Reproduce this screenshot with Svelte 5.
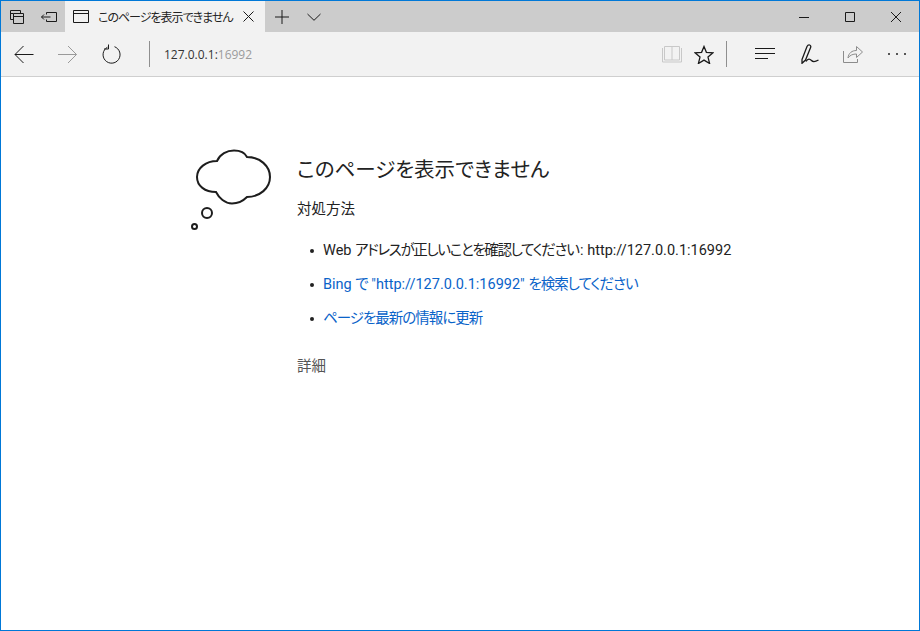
<script>
  const bullets = [
    { parts: [['Web ', ''], ['アドレスが正しいことを確認してください', 'cjk tight'], [': http://127.0.0.1:16992', '']], link: false },
    { parts: [['Bing ', ''], ['で', 'cjk'], [' "http://127.0.0.1:16992" ', ''], ['を検索してください', 'cjk']], link: true },
    { parts: [['ページを最新の情報に更新', 'cjk']], link: true }
  ];
</script>

<div class="window">
  <header class="titlebar">
    <div class="tabtools">
      <button class="tool" aria-label="タブ">
        <svg width="16" height="16" viewBox="0 0 16 16"><path d="M1.500 1.500h10v3M1.500 1.500v9h3M4.500 4.500h10v10h-10zM4.500 7.500h10M1.500 4.500h3" /></svg>
      </button>
      <button class="tool" aria-label="戻す">
        <svg width="16" height="12" viewBox="0 0 16 12"><path d="M5.500 3.500v-2h10v9h-10v-2M.5 6h9M3 3.500L.5 6 3 8.500" /></svg>
      </button>
    </div>
    <div class="tab">
      <svg class="tabicon" width="16" height="13" viewBox="0 0 16 13"><path d="M.5.5h15v12H.5zM.5 3.500h15" /></svg>
      <span class="tabtitle">このページを表示できません</span>
      <svg class="tabclose" width="11" height="11" viewBox="0 0 11 11"><path d="M.5.5l10 10M10.500.5l-10 10" /></svg>
    </div>
    <div class="newtab">
      <svg width="14" height="14" viewBox="0 0 14 14"><path d="M7 0v14M0 7h14" /></svg>
      <svg width="14" height="8" viewBox="0 0 14 8"><path d="M.5 1L7 7.300 13.500 1" /></svg>
    </div>
    <div class="controls">
      <svg width="10" height="10" viewBox="0 0 10 10"><path d="M0 5.500h10" /></svg>
      <svg width="10" height="10" viewBox="0 0 10 10"><path d="M.5.5h9v9h-9z" /></svg>
      <svg width="10" height="10" viewBox="0 0 10 10"><path d="M0 0l10 10M10 0L0 10" /></svg>
    </div>
  </header>

  <nav class="toolbar">
    <svg class="back" width="20" height="18" viewBox="0 0 20 18"><path d="M1 9.500h18.500M9.500 1L1 9.500 9.500 18" /></svg>
    <svg class="forward" width="20" height="18" viewBox="0 0 20 18"><path d="M0 9.500h18.500M10 1l8.500 8.500L10 18" /></svg>
    <svg class="reload" width="19" height="20" viewBox="0 0 19 20"><path d="M5.500 3.200A8.500 8.500 0 1 0 12.500 2.700M6.500.5v4.500H2" /></svg>
    <span class="sep first"></span>
    <span class="address">127.0.0.1:<span class="port">16992</span></span>
    <span class="grow"></span>
    <svg class="book" width="20" height="18" viewBox="0 0 20 18"><path d="M2.500 1.500h15v13.500h-15zM.5 3v14h19V3M10 2v13" /></svg>
    <svg class="star" width="20" height="19" viewBox="0 0 20 19"><path d="M10 1.500l2.400 5.800 6.600.5-5 4.300 1.600 6.400-5.600-3.400-5.600 3.400L6 12.100 1 7.800l6.600-.5z" /></svg>
    <span class="sep second"></span>
    <svg class="hub" width="20" height="12" viewBox="0 0 20 12"><path d="M0 .5h20M0 5.500h20M0 10.500h13" /></svg>
    <svg class="pen" width="18" height="20" viewBox="0 0 18 20"><path d="M1 15.500L6 2.500Q7 .5 8.700 1 10.300 1.800 9.600 3.500L4.500 16 1 19.300zM5 17.500C7 14 9 14.800 10.500 16.500S14 18 17.500 16" /></svg>
    <svg class="share" width="20" height="18" viewBox="0 0 20 18"><path d="M.5 6v11.500h14V14M5 13c.5-5 4-7.500 8.500-7.500V1.500l6 5.500-6 5.500V9C10 9 7 10 5 13z" /></svg>
    <span class="dots" aria-label="その他"><i></i><i></i><i></i></span>
  </nav>

  <main class="page">
    <svg class="cloud" width="84" height="84" viewBox="191 150 84 84">
      <path d="M217 161C220 154 227 150.500 234 150.500C240 150.500 245 153 247 157C260 157 270 166 270 177C270 188 260 197 247 197C243 201 238 203.500 232 203.500C225 203.500 219 198 216 192C205 192 197 186 197 177C197 168 206 161 217 161Z" />
      <circle cx="207" cy="213" r="5" />
      <circle cx="194.500" cy="226.500" r="2.500" />
    </svg>
    <div class="content">
      <h1>このページを表示できません</h1>
      <p class="sub">対処方法</p>
      <ul>
        {#each bullets as item}
          <li class:link={item.link}>{#each item.parts as [text, kind]}{#if kind}<span class={kind}>{text}</span>{:else}{text}{/if}{/each}</li>
        {/each}
      </ul>
      <p class="details">詳細</p>
    </div>
  </main>
</div>

<style>
  :global(body) {
    margin: 0;
    background: #fff;
  }
  .window {
    box-sizing: border-box;
    width: 920px;
    height: 631px;
    border: 1px solid #0078d7;
    display: flex;
    flex-direction: column;
    font-family: Roboto, "Noto Sans CJK JP", sans-serif;
    font-feature-settings: "palt";
    overflow: hidden;
  }
  svg {
    fill: none;
    stroke: #1a1a1a;
    stroke-width: 1;
    flex: none;
  }
  button {
    border: 0;
    background: none;
    padding: 0;
    display: flex;
    align-items: center;
    justify-content: center;
  }
  .titlebar {
    height: 31px;
    background: #cccccc;
    display: flex;
    flex: none;
  }
  .tabtools {
    width: 64px;
    display: flex;
  }
  .tool {
    width: 32px;
    height: 31px;
  }
  .tab {
    width: 200px;
    background: #f2f2f2;
    display: flex;
    align-items: center;
  }
  .tabicon {
    margin-left: 8px;
  }
  .tabtitle {
    margin-left: 9px;
    font-size: 12px;
    letter-spacing: -1px;
    color: #222;
    white-space: nowrap;
  }
  .tabclose {
    margin-left: auto;
    margin-right: 11px;
  }
  .newtab {
    display: flex;
    align-items: center;
    gap: 18px;
    margin-left: 10px;
  }
  .controls {
    margin-left: auto;
    display: flex;
    align-items: center;
    gap: 36px;
    padding-right: 18px;
  }
  .toolbar {
    height: 44px;
    background: #f2f2f2;
    border-bottom: 1px solid #cfcfcf;
    display: flex;
    align-items: center;
    flex: none;
  }
  .back {
    margin-left: 13px;
  }
  .forward {
    margin-left: 24px;
    stroke: #9a9a9a;
  }
  .reload {
    margin-left: 24px;
  }
  .sep {
    width: 1px;
    height: 26px;
    background: #8f8f8f;
  }
  .sep.first {
    margin-left: 28px;
  }
  .sep.second {
    margin-left: 12px;
  }
  .address {
    margin-left: 14px;
    font-family: "Open Sans", sans-serif;
    font-size: 12px;
    color: #333;
  }
  .port {
    color: #9b9b9b;
  }
  .grow {
    flex: 1;
  }
  .book {
    stroke: #c8c8c8;
  }
  .star,
  .pen {
    stroke-width: 1.300;
  }
  .star {
    margin-left: 12px;
  }
  .hub {
    margin-left: 28px;
  }
  .pen {
    margin-left: 26px;
  }
  .share {
    margin-left: 24px;
    stroke: #8c8c8c;
  }
  .dots {
    margin-left: 24.500px;
    margin-right: 13px;
    display: flex;
    gap: 5.500px;
  }
  .dots i {
    width: 2.500px;
    height: 2.500px;
    border-radius: 50%;
    background: #222;
  }
  .page {
    flex: 1;
    display: flex;
    padding: 73px 0 0 190px;
  }
  .cloud {
    stroke: #1d1d1d;
    stroke-width: 2;
    overflow: visible;
  }
  .content {
    margin-left: 22px;
    color: #222;
  }
  h1 {
    margin: 2px 0 0;
    font-size: 20.500px;
    font-weight: 400;
    line-height: 36px;
  }
  .sub {
    margin: 12px 0 0;
    font-size: 14.500px;
    line-height: 20px;
  }
  ul {
    margin: 21px 0 0;
    padding: 0 0 0 26px;
    font-size: 14.500px;
    line-height: 20px;
    list-style: none;
  }
  li {
    margin-bottom: 14px;
    position: relative;
    white-space: nowrap;
  }
  li::before {
    content: "";
    position: absolute;
    left: -13px;
    top: 8px;
    width: 4px;
    height: 4px;
    border-radius: 50%;
    background: #222;
  }
  li.link {
    color: #0a63c9;
  }
  .cjk {
    letter-spacing: -1px;
  }
  .tight {
    letter-spacing: -1.350px;
    padding-right: 1.500px;
  }
  .details {
    margin: 28px 0 0;
    font-size: 14.500px;
    line-height: 20px;
    color: #555;
  }
</style>
